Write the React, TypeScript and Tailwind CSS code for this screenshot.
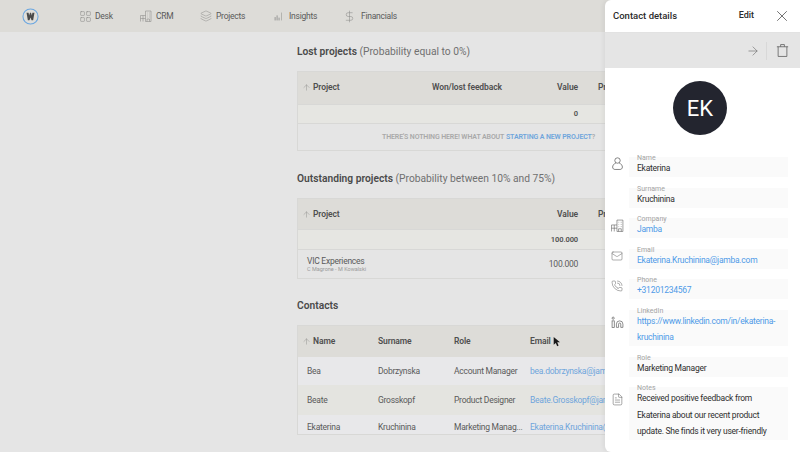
import { ArrowRight, ArrowUp, DollarSign, FileText, LayoutGrid, Layers, Mail, PhoneCall, X } from "lucide-react";
import type { ReactNode } from "react";

const font = "font-['Roboto','Noto_Sans',sans-serif]";

const BuildingIcon = ({ className }: { className?: string }) => (
  <svg viewBox="0 0 24 24" fill="none" stroke="currentColor" strokeWidth="1.1" className={className}>
    <path d="M11 23V2h11v21H11zM1 23V11h10M1 17h10M6 11v12M14 6h1M18 6h1.5M14 10h1M18 10h1.5M14 14h1M18 14h1.5M14 23v-5h5v5" />
  </svg>
);

const BarsIcon = ({ className }: { className?: string }) => (
  <svg viewBox="0 0 16 16" fill="currentColor" className={className}>
    <rect x="1" y="9" width="2" height="6" />
    <rect x="4.5" y="6" width="2" height="9" />
    <rect x="8" y="10" width="2" height="5" />
    <rect x="12.5" y="1" width="1.2" height="14" />
  </svg>
);

const UserIcon = ({ className }: { className?: string }) => (
  <svg viewBox="0 0 20 24" fill="none" stroke="currentColor" strokeWidth="1.4" className={className}>
    <circle cx="10" cy="6.5" r="5" />
    <path d="M7 11C3 12.5 1 16 1 18.5 1 21.500 3 23 5.500 23h9c2.500 0 4.500-1.500 4.500-4.500 0-2.500-2-6-6-7.500" />
  </svg>
);

const LinkedinIcon = ({ className }: { className?: string }) => (
  <svg viewBox="0 0 24 24" fill="none" stroke="currentColor" strokeWidth="1.3" className={className}>
    <path d="M16 9a6 6 0 0 1 6 6v6h-4v-6a2 2 0 0 0-4 0v6h-4v-6a6 6 0 0 1 6-6z" />
    <rect x="2" y="9" width="4" height="12" />
    <circle cx="4" cy="4" r="2" />
  </svg>
);

const TrashIcon = ({ className }: { className?: string }) => (
  <svg viewBox="0 0 24 24" fill="none" stroke="currentColor" strokeWidth="1.3" className={className}>
    <path d="M3 6h18M9 6V2.500h6V6M5 6v15.500h14V6" />
  </svg>
);

const Logo = () => (
  <svg viewBox="0 0 18 18" className="w-[17px] h-[17px]">
    <circle cx="9" cy="9" r="8" fill="#dfdeda" stroke="#6aa6e0" strokeWidth="1.1" />
    <path d="M4.800 5h2.200l.5 3 1-3h1l1 3 .5-3h2.200l-1.400 8h-1.700L9 10l-1.100 3H6.200z" fill="#4a4a4a" />
  </svg>
);

const Cursor = () => (
  <svg viewBox="0 0 10 14" className="absolute left-[553px] top-[337px] w-[7px] h-[10px]">
    <path d="M1 0v11l3-2.500 2 4.500 2-1-2-4.500h4z" fill="#1a1a1a" />
  </svg>
);

const navItems: { label: string; width: string; icon: ReactNode }[] = [
  { label: "Desk", width: "w-[61px]", icon: <LayoutGrid className="w-[13px] h-[13px]" strokeWidth={1} /> },
  { label: "CRM", width: "w-[60px]", icon: <BuildingIcon className="w-[12px] h-[12px]" /> },
  { label: "Projects", width: "w-[73px]", icon: <Layers className="w-[12px] h-[12px]" strokeWidth={1} /> },
  { label: "Insights", width: "w-[72px]", icon: <BarsIcon className="w-[9px] h-[9px] ml-[1px] text-[#a0a09e]" /> },
  { label: "Financials", width: "w-[60px]", icon: <DollarSign className="w-[13px] h-[13px] ml-[-2px]" strokeWidth={1} /> },
];

const Heading = ({ bold, rest }: { bold: string; rest?: string }) => (
  <h2 className="text-[10.25px] leading-4 text-[#4a4a4a]">
    <span className="font-semibold">{bold}</span>
    {rest && <span className="text-[#707070]"> {rest}</span>}
  </h2>
);

const SortArrow = () => <ArrowUp className="w-[9px] h-[9px] text-[#8a8a88] mr-[2px] shrink-0" strokeWidth={1.2} />;

const Th = ({ className, children }: { className: string; children: ReactNode }) => (
  <div className={`text-[8.5px] tracking-[-0.1px] font-semibold text-[#4f4f4f] whitespace-nowrap ${className}`}>{children}</div>
);

const LostTable = () => (
  <div className="w-[420px] border border-[#d8d8d6] text-[8.5px]">
    <div className="flex items-center h-[32px] bg-[#dddcd8] pl-[4px] pb-[2px]">
      <SortArrow />
      <Th className="w-[119px]">Project</Th>
      <Th className="w-[100px]">Won/lost feedback</Th>
      <Th className="w-[46px] text-right">Value</Th>
      <Th className="ml-[20px]">Probability</Th>
    </div>
    <div className="flex items-center h-[19px] bg-[#e6e6e2] border-t border-[#d8d8d6] pl-[270px] font-semibold text-[#4f4f4f] text-[7.5px]">
      <span className="w-[10px] text-right">0</span>
    </div>
    <div className="flex items-center h-[27px] bg-[#e5e5e5] border-t border-[#d8d8d6] pl-[84px] font-semibold text-[7px] tracking-[-0.12px] text-[#a9a9a9] whitespace-nowrap">
      THERE'S NOTHING HERE! WHAT ABOUT&nbsp;
      <span className="text-[#6fa5dc]">STARTING A NEW PROJECT</span>?
    </div>
  </div>
);

const OutstandingTable = () => (
  <div className="w-[420px] border border-[#d8d8d6] text-[8.5px]">
    <div className="flex items-center h-[30px] bg-[#dddcd8] pl-[4px]">
      <SortArrow />
      <Th className="w-[219px]">Project</Th>
      <Th className="w-[46px] text-right">Value</Th>
      <Th className="ml-[20px]">Probability</Th>
    </div>
    <div className="flex items-center justify-end h-[20px] bg-[#e6e6e2] border-t border-[#d8d8d6] pr-[138px] font-semibold text-[7.5px] tracking-[-0.1px] text-[#4f4f4f]">
      100.000
    </div>
    <div className="flex items-center justify-between h-[29px] bg-[#e5e5e5] border-t border-[#d8d8d6] pl-[9px] pr-[138px]">
      <div>
        <p className="text-[8.5px] tracking-[-0.25px] leading-[10px] text-[#5a5a5a]">VIC Experiences</p>
        <p className="text-[5.5px] leading-[7px] text-[#9a9a9a]">C Magrone - M Kowalski</p>
      </div>
      <span className="text-[8.5px] tracking-[-0.25px] text-[#5a5a5a]">100.000</span>
    </div>
  </div>
);

const contacts = [
  { name: "Bea", surname: "Dobrzynska", role: "Account Manager", email: "bea.dobrzynska@jamba.com", row: "bg-[#e8e8ea] h-[28px] items-center" },
  { name: "Beate", surname: "Grosskopf", role: "Product Designer", email: "Beate.Grosskopf@jamba.com", row: "bg-[#e4e4e0] h-[30px] items-center" },
  { name: "Ekaterina", surname: "Kruchinina", role: "Marketing Manag...", email: "Ekaterina.Kruchinina@jamba.com", row: "bg-[#e8e8ea] h-[19px] pt-[6px]" },
];

const ContactsTable = () => (
  <div className="w-[420px] border border-[#d8d8d6]">
    <div className="flex items-center h-[31px] bg-[#dddcd8] pl-[4px]">
      <SortArrow />
      <Th className="w-[65px]">Name</Th>
      <Th className="w-[76px]">Surname</Th>
      <Th className="w-[76px]">Role</Th>
      <Th className="">Email</Th>
    </div>
    {contacts.map((c) => (
      <div key={c.name} className={`flex pl-[9px] text-[8.5px] tracking-[-0.25px] leading-[12px] text-[#5a5a5a] whitespace-nowrap ${c.row}`}>
        <span className="w-[71px]">{c.name}</span>
        <span className="w-[76px]">{c.surname}</span>
        <span className="w-[76px]">{c.role}</span>
        <span className="text-[#6fa5dc]">{c.email}</span>
      </div>
    ))}
  </div>
);

const Field = ({ label, icon, iconTop = "pt-[1px]", link, children }: { label: string; icon?: ReactNode; iconTop?: string; link?: boolean; children: ReactNode }) => (
  <div className="flex">
    <div className={`w-[24px] shrink-0 flex justify-center text-[#5f5f5f] ${iconTop}`}>{icon}</div>
    <div className="flex flex-col w-[159px] bg-[#fafafa] pl-[8px] pr-[4px] pb-[0.5px] mb-[10.5px]">
      <p className="h-[6px] -mt-[3px] text-[7px] leading-[8px] text-[#a3a3a3]">{label}</p>
      <div className={`text-[8.5px] tracking-[-0.25px] leading-[16.5px] ${link ? "text-[#4f9be8]" : "text-[#2f2f2f]"}`}>{children}</div>
    </div>
  </div>
);

const Drawer = () => (
  <aside className="absolute top-0 right-0 bottom-0 w-[195px] bg-white rounded-l-[6px] overflow-hidden shadow-[-2px_0_4px_rgba(0,0,0,0.05)]">
    <div className="flex items-center h-[33px] pl-[8px] pr-[9px] border-b border-[#e2e2e2]">
      <span className="text-[9.5px] font-medium text-[#2b2b2b]">Contact details</span>
      <span className="ml-auto mr-[19px] text-[9px] font-medium text-[#2b2b2b]">Edit</span>
      <X className="w-[18px] h-[18px] text-[#444]" strokeWidth={1} />
    </div>
    <div className="flex items-center justify-end h-[35px] bg-[#e5e5e5] pr-[10px]">
      <ArrowRight className="w-[14px] h-[14px] text-[#606060]" strokeWidth={1} />
      <div className="w-px h-[18px] bg-[#d8d8d8] ml-[6px] mr-[8px]" />
      <TrashIcon className="w-[15px] h-[15px] text-[#606060]" />
    </div>
    <div className="flex justify-center pt-[13px] pb-[22px] pr-[5px]">
      <div className="flex items-center justify-center w-[54px] h-[54px] rounded-full bg-[#23252f] text-white text-[22px]">EK</div>
    </div>
    <div>
      <Field label="Name" iconTop="pt-0" icon={<UserIcon className="w-[11px] h-[13px]" />}>Ekaterina</Field>
      <Field label="Surname">Kruchinina</Field>
      <Field label="Company" link icon={<BuildingIcon className="w-[13px] h-[13px]" />}>Jamba</Field>
      <Field label="Email" link icon={<Mail className="w-[12px] h-[12px]" strokeWidth={1} />}>Ekaterina.Kruchinina@jamba.com</Field>
      <Field label="Phone" link icon={<PhoneCall className="w-[12px] h-[12px]" strokeWidth={1} />}>+31201234567</Field>
      <Field label="LinkedIn" link iconTop="pt-[6px]" icon={<LinkedinIcon className="w-[13px] h-[13px]" />}>https://www.linkedin.com/in/ekaterina-kruchinina</Field>
      <Field label="Role">Marketing Manager</Field>
      <Field label="Notes" iconTop="pt-[6px]" icon={<FileText className="w-[13px] h-[13px]" strokeWidth={1} />}>Received positive feedback from Ekaterina about our recent product update. She finds it very user-friendly</Field>
    </div>
  </aside>
);

export default function App() {
  return (
    <div className={`relative w-full h-[452px] overflow-hidden bg-[#e5e5e5] ${font}`}>
      <nav className="flex items-center h-[32px] bg-[#dddcd8] pl-[22px]">
        <Logo />
        <div className="flex items-center ml-[40px]">
          {navItems.map((item) => (
            <div key={item.label} className={`flex items-center text-[8.5px] tracking-[-0.25px] text-[#5a5a5a] ${item.width}`}>
              <span className="flex w-[16px] text-[#8a8a88]">{item.icon}</span>
              {item.label}
            </div>
          ))}
        </div>
      </nav>
      <main className="pl-[297px] pt-[12px] w-[820px]">
        <Heading bold="Lost projects" rest="(Probability equal to 0%)" />
        <div className="mt-[11px] mb-[20px]"><LostTable /></div>
        <Heading bold="Outstanding projects" rest="(Probability between 10% and 75%)" />
        <div className="mt-[11px] mb-[19px]"><OutstandingTable /></div>
        <Heading bold="Contacts" />
        <div className="mt-[11px]"><ContactsTable /></div>
      </main>
      <Cursor />
      <Drawer />
    </div>
  );
}
